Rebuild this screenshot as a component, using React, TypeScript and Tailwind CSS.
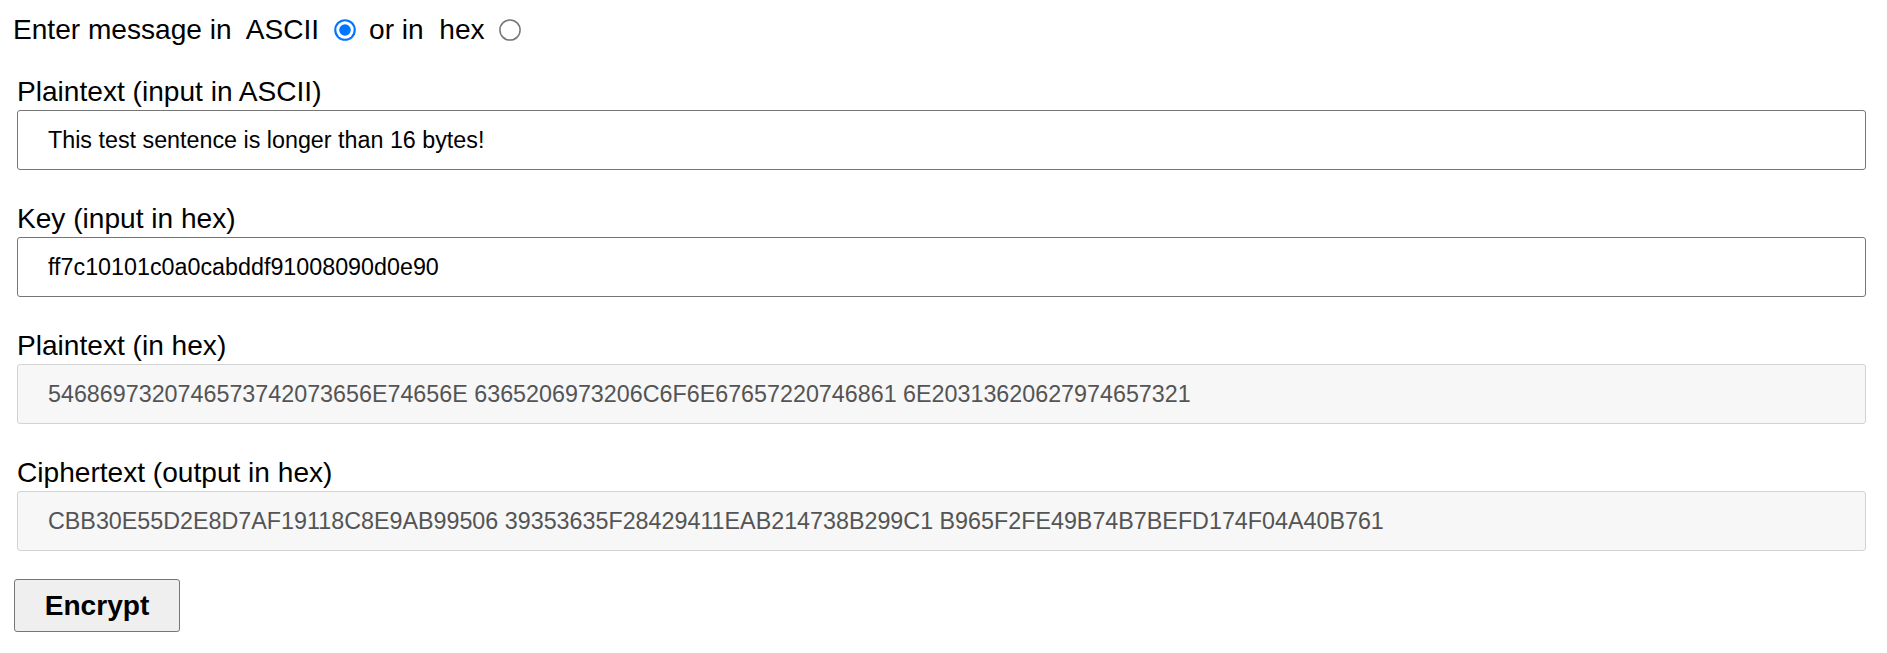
import React from "react";

function Radio({ checked }: { checked?: boolean }) {
  return (
    <svg width="22" height="22" viewBox="0 0 22 22" className="shrink-0">
      {checked ? (
        <>
          <circle cx="11" cy="11" r="10.8" fill="#0075ff" />
          <circle cx="11" cy="11" r="8.7" fill="#ffffff" />
          <circle cx="11" cy="11" r="5.8" fill="#0075ff" />
        </>
      ) : (
        <circle cx="11" cy="11" r="10.1" fill="#ffffff" stroke="#767676" strokeWidth="1.5" />
      )}
    </svg>
  );
}

function Field({ label, value, readOnly }: { label: string; value: string; readOnly?: boolean }) {
  return (
    <div className="flex flex-col">
      <div className="text-[28.1px] leading-[32px] whitespace-pre">{label}</div>
      <div
        className={
          readOnly
            ? "mt-[2px] h-[60px] flex items-center pl-[30px] border border-[#d3d3d3] rounded-[3px] bg-[#f7f7f7] text-[23.3px] text-[#545454] whitespace-pre"
            : "mt-[2px] h-[60px] flex items-center pl-[30px] border border-[#767676] rounded-[3px] bg-white text-[23.3px] text-black whitespace-pre"
        }
      >
        {value}
      </div>
    </div>
  );
}

export default function App() {
  return (
    <div className="bg-white w-[1887px] h-[653px] font-['Liberation_Sans',Arial,sans-serif] text-black">
      <div className="flex items-center pl-[13px] pt-[14px] h-[46px] text-[28.1px] leading-[32px] whitespace-pre">
        <span>Enter message in  ASCII</span>
        <span className="ml-[15px] flex">
          <Radio checked />
        </span>
        <span className="ml-[13px]">or in  hex</span>
        <span className="ml-[14px] flex">
          <Radio />
        </span>
      </div>
      <div className="ml-[17px] mr-[21px] mt-[30px] flex flex-col gap-[33px]">
        <Field label="Plaintext (input in ASCII)" value="This test sentence is longer than 16 bytes!" />
        <Field label="Key (input in hex)" value="ff7c10101c0a0cabddf91008090d0e90" />
        <Field
          label="Plaintext (in hex)"
          value="5468697320746573742073656E74656E 6365206973206C6F6E67657220746861 6E20313620627974657321"
          readOnly
        />
        <Field
          label="Ciphertext (output in hex)"
          value="CBB30E55D2E8D7AF19118C8E9AB99506 39353635F28429411EAB214738B299C1 B965F2FE49B74B7BEFD174F04A40B761"
          readOnly
        />
      </div>
      <button className="mt-[28px] ml-[14px] w-[166px] h-[53px] flex items-center justify-center bg-[#efefef] border border-[#767676] rounded-[3px] text-[28.1px] font-bold leading-[32px] text-black">
        Encrypt
      </button>
    </div>
  );
}
